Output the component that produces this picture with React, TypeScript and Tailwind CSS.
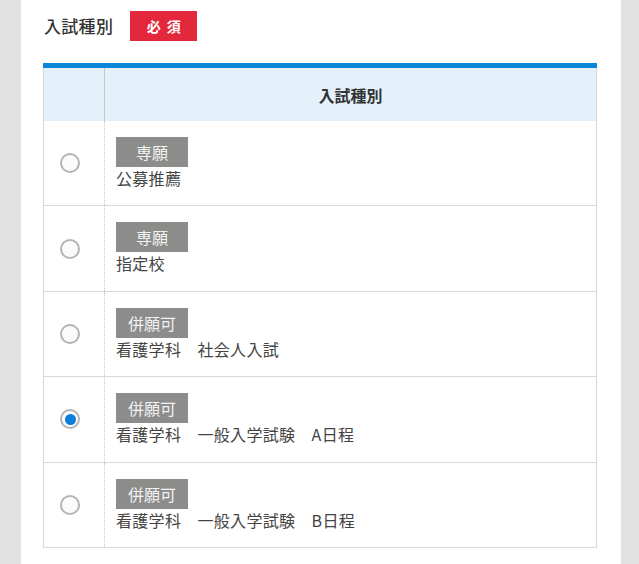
const rows = [
  { tag: "専願", text: "公募推薦", checked: false },
  { tag: "専願", text: "指定校", checked: false },
  { tag: "併願可", text: "看護学科　社会人入試", checked: false },
  { tag: "併願可", text: "看護学科　一般入学試験　A日程", checked: true },
  { tag: "併願可", text: "看護学科　一般入学試験　B日程", checked: false },
];

const Radio = ({ checked }: { checked: boolean }) => (
  <span className="flex h-[20px] w-[20px] items-center justify-center rounded-full border-2 border-[#b4b4b4] bg-[#fbfbfb]">
    {checked && <span className="h-[11px] w-[11px] rounded-full bg-[#0b7fd9]" />}
  </span>
);

export default function App() {
  return (
    <div
      className="min-h-[564px] bg-[#e2e2e2]"
      style={{ fontFamily: '"Noto Sans CJK JP", "Noto Sans", sans-serif' }}>
      <div className="ml-[21px] min-h-[564px] w-[600px] bg-white px-[22px] pt-[11px] text-[#333]">
        <div className="flex h-[30px] items-center gap-[17px] pl-[1px]">
          <h2 className="text-[17px] font-medium tracking-[0.3px] text-[#333]">入試種別</h2>
          <span className="flex h-[30px] w-[67px] items-center justify-center bg-[#e3283b] text-[14px] font-bold tracking-[6px] text-white">
            <span className="ml-[6px]">必須</span>
          </span>
        </div>

        <div className="mt-[22px] w-[554px] border-t-[5px] border-[#0a86d8]">
          <div className="flex h-[53px] border-x border-[#d8d8d8] bg-[#e4f1fb]">
            <div className="w-[61px] border-r border-[#c8c8c8]" />
            <div className="flex flex-1 items-center justify-center text-[16px] font-bold text-[#333]">
              入試種別
            </div>
          </div>
          <div className="border-x border-b border-[#d8d8d8]">
            {rows.map((row, index) => (
              <label
                key={index}
                className="flex border-t border-[#d8d8d8] first:border-t-0">
                <div className="flex w-[61px] items-center border-r border-dotted border-[#c8c8c8] pl-[16px]">
                  <Radio checked={row.checked} />
                </div>
                <div className="flex flex-1 flex-col items-start pb-[16px] pl-[11px] pt-[16px]">
                  <span className="flex h-[30px] w-[72px] items-center justify-center bg-[#8c8c8a] text-[16px] text-[#f2f2f2]">
                    {row.tag}
                  </span>
                  <span className="text-[16px] leading-[22.4px] tracking-[0.3px] text-[#444]">{row.text}</span>
                </div>
              </label>
            ))}
          </div>
        </div>
      </div>
    </div>
  );
}
